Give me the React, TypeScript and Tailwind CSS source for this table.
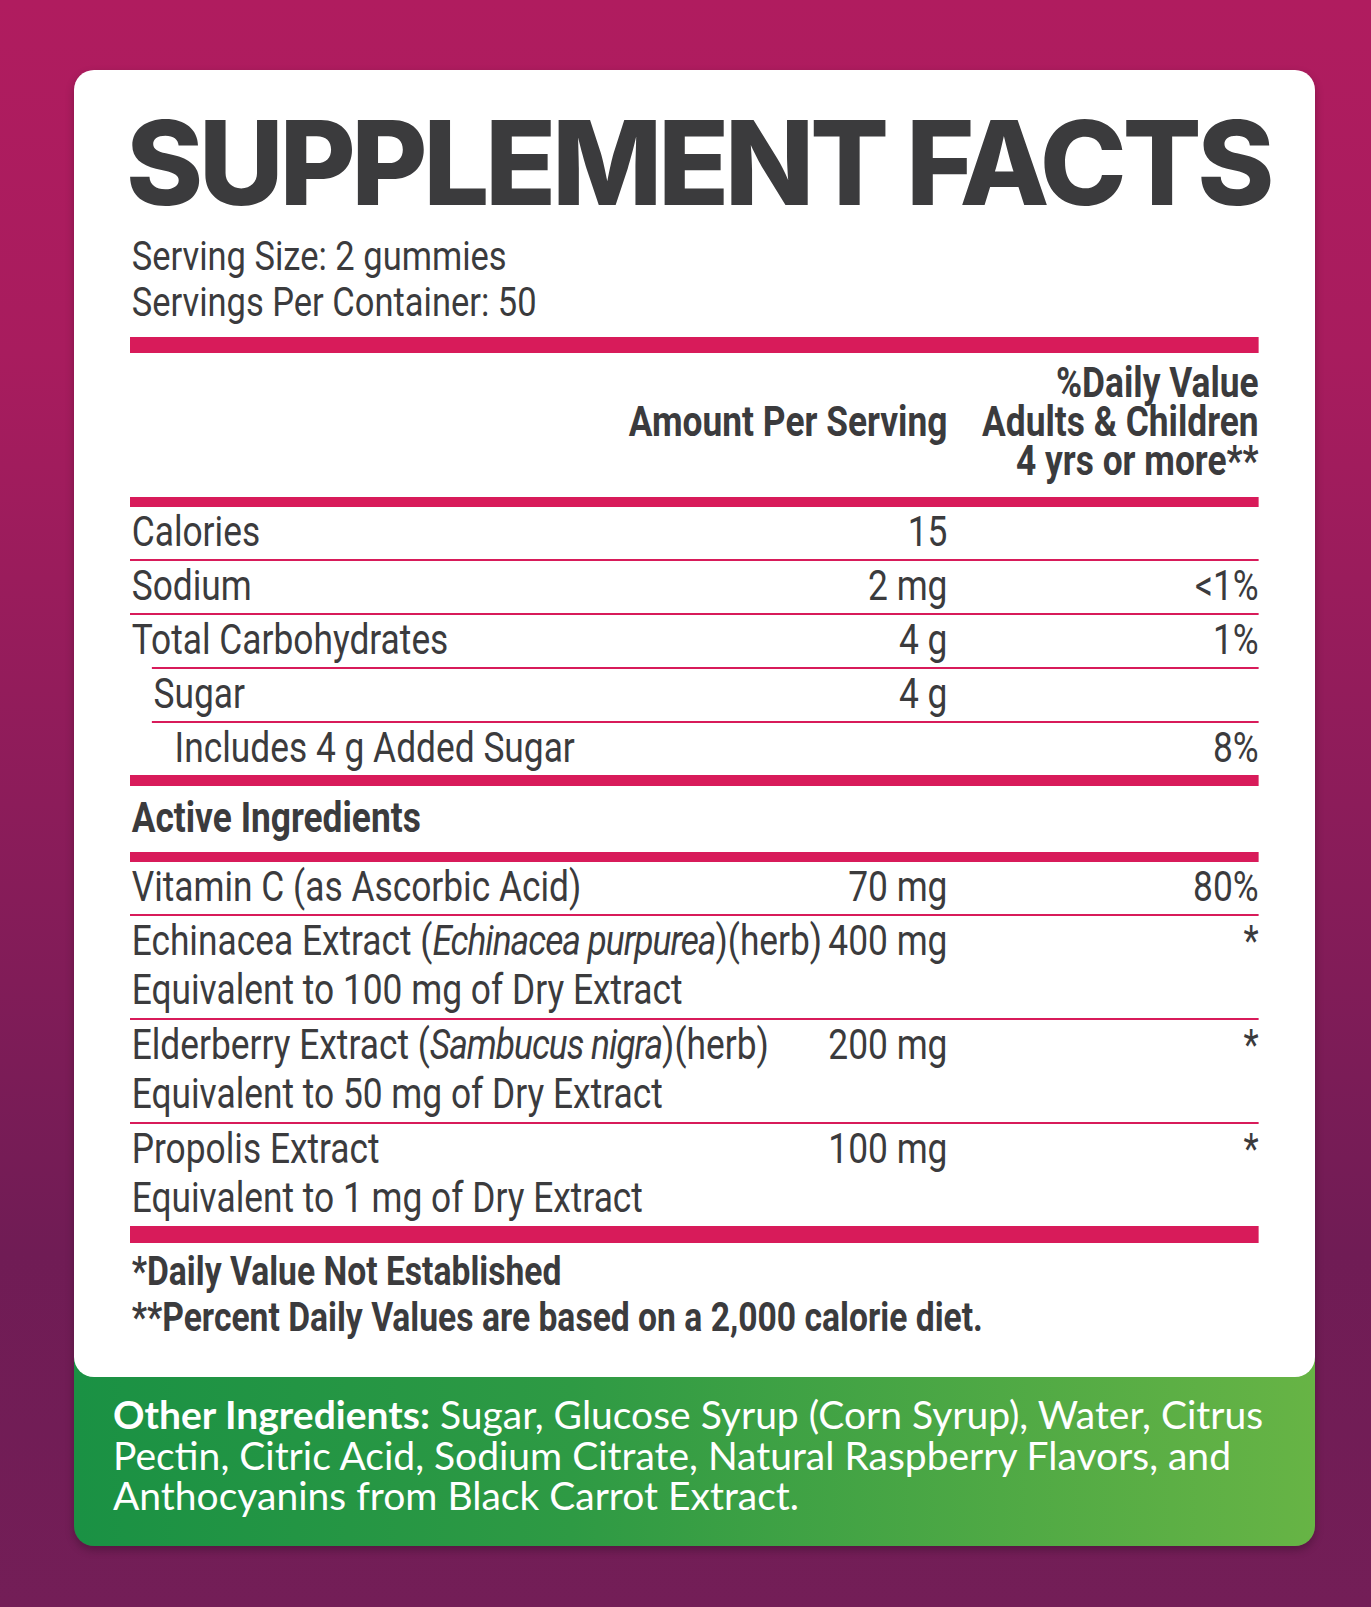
import React from "react";

const BAR = "bg-[#d81b5a]";
const DIV = "border-t-2 border-[#d81b5a]";

function Row({
  name,
  amt,
  dv,
  className = "",
}: {
  name: React.ReactNode;
  amt?: React.ReactNode;
  dv?: React.ReactNode;
  className?: string;
}) {
  return (
    <div className={`flex items-center pb-[3px] ${className}`}>
      <div className="min-w-0 flex-1 whitespace-nowrap pl-[2px]">{name}</div>
      <div className="whitespace-nowrap text-right">{amt}</div>
      <div className="w-[370px] shrink-0 text-right">{dv}</div>
    </div>
  );
}

function TwoLine({
  l1,
  l2,
  amt,
}: {
  l1: React.ReactNode;
  l2: React.ReactNode;
  amt: string;
}) {
  return (
    <div className={`flex items-start ${DIV} h-[104px] leading-[49px]`}>
      <div className="min-w-0 flex-1 whitespace-nowrap pl-[2px]">
        <div>{l1}</div>
        <div>{l2}</div>
      </div>
      <div className="whitespace-nowrap text-right">{amt}</div>
      <div className="w-[370px] shrink-0 text-right">*</div>
    </div>
  );
}

export default function App() {
  return (
    <div className="min-h-[1607px] w-full overflow-hidden bg-[linear-gradient(180deg,#b01c5f_0%,#a81c5e_22%,#8c1c5a_50%,#701c55_78%,#731e57_100%)] pl-[74px] pt-[70px] text-[#3b3b3d]">
      <div className="w-[1241px] rounded-[20px] shadow-[0_4px_8px_rgba(0,0,0,0.25)]">
        <div className="relative z-10 rounded-[20px] bg-white px-[56px] pb-[36px] pt-[34px]">
          <h1 className="-ml-[4px] whitespace-nowrap font-['Inter',sans-serif] text-[117px] font-extrabold leading-[117px] tracking-[-4.4px]">
            SUPPLEMENT FACTS
          </h1>
          <div className="w-[1342px] origin-left scale-x-[0.841] font-['Roboto',sans-serif]">
            <div className="mt-[12px] pl-[2px] text-[41px] leading-[46px]">
              <div>Serving Size: 2 gummies</div>
              <div>Servings Per Container: 50</div>
            </div>
            <div className={`mt-[12px] h-[16px] ${BAR}`} />
            <div className="flex items-center justify-end pb-[17px] pt-[10px] text-[42px] font-bold leading-[39px]">
              <div className="whitespace-nowrap text-right">Amount Per Serving</div>
              <div className="w-[370px] shrink-0 whitespace-nowrap text-right">
                %Daily Value
                <br />
                Adults &amp; Children
                <br />4 yrs or more**
              </div>
            </div>
            <div className={`h-[10px] ${BAR}`} />

            <div className="text-[42px]">
              <Row className="h-[52px]" name="Calories" amt="15" />
              <Row className={`h-[54px] ${DIV}`} name="Sodium" amt="2 mg" dv="<1%" />
              <Row className={`h-[54px] ${DIV}`} name="Total Carbohydrates" amt="4 g" dv="1%" />
              <Row className={`ml-[26px] h-[54px] ${DIV}`} name="Sugar" amt="4 g" />
              <Row
                className={`ml-[26px] h-[54px] ${DIV}`}
                name={<span className="pl-[25px]">Includes 4 g Added Sugar</span>}
                dv="8%"
              />
            </div>
            <div className={`h-[11px] ${BAR}`} />
            <div className="flex h-[66px] items-center pb-[3px] pl-[2px] text-[42px] font-bold">Active Ingredients</div>
            <div className={`h-[10px] ${BAR}`} />

            <div className="text-[42px]">
              <Row className="h-[52px]" name="Vitamin C (as Ascorbic Acid)" amt="70 mg" dv="80%" />
              <TwoLine
                l1={
                  <>
                    Echinacea Extract (<i className="tracking-[-1.2px]">Echinacea purpurea</i>)(herb)
                  </>
                }
                l2="Equivalent to 100 mg of Dry Extract"
                amt="400 mg"
              />
              <TwoLine
                l1={
                  <>
                    Elderberry Extract (<i className="tracking-[-1.2px]">Sambucus nigra</i>)(herb)
                  </>
                }
                l2="Equivalent to 50 mg of Dry Extract"
                amt="200 mg"
              />
              <TwoLine l1="Propolis Extract" l2="Equivalent to 1 mg of Dry Extract" amt="100 mg" />
            </div>
            <div className={`h-[17px] ${BAR}`} />
            <div className="mt-[6px] pl-[2px] text-[40px] font-bold leading-[46px]">
              <div>*Daily Value Not Established</div>
              <div>**Percent Daily Values are based on a 2,000 calorie diet.</div>
            </div>
          </div>
        </div>
        <div className="-mt-[20px] rounded-b-[20px] bg-[linear-gradient(90deg,#1a9144_0%,#2e9a44_40%,#67b445_100%)] pb-[30px] pl-[39px] pr-[20px] pt-[37px] font-['Lato',sans-serif] text-[39px] leading-[40.5px] text-white">
          <span className="font-bold">Other Ingredients:</span> Sugar, Glucose Syrup (Corn Syrup), Water, Citrus
          <br />
          Pectin, Citric Acid, Sodium Citrate, Natural Raspberry Flavors, and
          <br />
          Anthocyanins from Black Carrot Extract.
        </div>
      </div>
    </div>
  );
}
